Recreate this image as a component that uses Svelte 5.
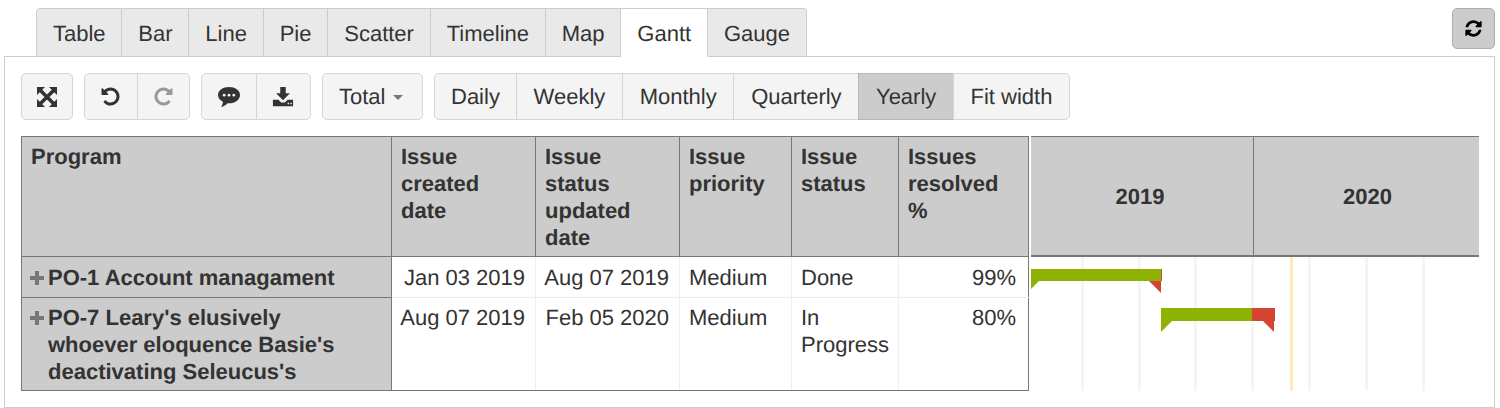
<script>
  const tabs = ['Table', 'Bar', 'Line', 'Pie', 'Scatter', 'Timeline', 'Map', 'Gantt', 'Gauge'];
  const periods = ['Daily', 'Weekly', 'Monthly', 'Quarterly', 'Yearly', 'Fit width'];
  const gridLines = [1081, 1138, 1194, 1251, 1308, 1365, 1422];
  const undoPath = 'M1664 896q0 156-61 298t-164 245-245 164-298 61q-172 0-327-72.500t-264-204.500q-7-10-6.500-22.500t8.500-20.500l137-138q10-9 25-9 16 2 23 12 73 95 179 147t225 52q104 0 198.500-40.500t163.500-109.500 109.500-163.500 40.500-198.500-40.500-198.500-109.500-163.500-163.500-109.500-198.500-40.500q-98 0-188 35.500t-160 101.500l137 138q31 30 14 69-17 40-59 40h-448q-26 0-45-19t-19-45v-448q0-42 40-59 39-17 69 14l130 129q107-101 244.500-156.500t284.500-55.500q156 0 298 61t245 164 164 245 61 298z';
</script>

<div class="page">
  <div class="top">
    <ul class="tabs">
      {#each tabs as tab}
        <li class:active={tab === 'Gantt'}>{tab}</li>
      {/each}
    </ul>
    <button class="refresh" aria-label="Refresh">
      <svg viewBox="0 0 1792 1792" width="19" height="19"><path d="M1639 1056q0 5-1 7-64 268-268 434.500t-478 166.500q-146 0-282.500-55t-243.500-157l-129 129q-19 19-45 19t-45-19-19-45v-448q0-26 19-45t45-19h448q26 0 45 19t19 45-19 45l-137 137q71 66 161 102t187 36q134 0 250-65t186-179q11-17 53-117 8-23 30-23h192q13 0 22.500 9.500t9.500 22.500zm25-800v448q0 26-19 45t-45 19h-448q-26 0-45-19t-19-45 19-45l138-138q-148-137-349-137-134 0-250 65t-186 179q-11 17-53 117-8 23-30 23h-199q-13 0-22.500-9.500t-9.500-22.500v-7q65-268 270-434.500t480-166.500q146 0 284 55.500t245 156.500l130-129q19-19 45-19t45 19 19 45z"/></svg>
    </button>
  </div>

  <div class="panel">
    <div class="toolbar">
      <div class="group">
        <button class="icon first" aria-label="Fullscreen">
          <svg viewBox="0 0 20 20" width="20" height="20">
            <path d="M0 0h8L0 8zM20 0v8l-8-8zM0 20v-8l8 8zM20 20h-8l8-8z"/>
            <path d="M3 3l14 14M17 3L3 17" stroke="#333" stroke-width="3.600" fill="none"/>
          </svg>
        </button>
      </div>
      <div class="group">
        <button class="icon" aria-label="Undo">
          <svg viewBox="0 0 1792 1792" width="21" height="21"><path d={undoPath}/></svg>
        </button>
        <button class="icon disabled" aria-label="Redo">
          <svg viewBox="0 0 1792 1792" width="21" height="21"><path transform="matrix(-1 0 0 1 1792 0)" d={undoPath}/></svg>
        </button>
      </div>
      <div class="group">
        <button class="icon wide" aria-label="Comment">
          <svg viewBox="0 0 24 24" width="24" height="24">
            <path d="M12 2C5.900 2 1 5.500 1 10c0 2.900 2 5.300 5 6.700-.2 2-1 4-2 5.300 2.700-.6 5-2.300 6.600-3.800.5.100.9.100 1.400.100 6.100 0 11-3.600 11-8.300S18.100 2 12 2z"/>
            <circle cx="7.200" cy="10.200" r="1.400" fill="#f4f4f4"/><circle cx="12" cy="10.200" r="1.400" fill="#f4f4f4"/><circle cx="16.800" cy="10.200" r="1.400" fill="#f4f4f4"/>
          </svg>
        </button>
        <button class="icon wide" aria-label="Download">
          <svg viewBox="0 0 24 24" width="22" height="22">
            <path d="M9 1h6v7h4.500L12 15.500 4.500 8H9z"/>
            <path fill-rule="evenodd" d="M1 15h6l3 3h4l3-3h6v7H1zM17 18.200h1.600v1.600H17zM20 18.200h1.600v1.600H20z"/>
          </svg>
        </button>
      </div>
      <div class="group">
        <button class="total">Total <span class="caret"></span></button>
      </div>
      <div class="group">
        {#each periods as period}
          <button class="period" class:on={period === 'Yearly'}>{period}</button>
        {/each}
      </div>
    </div>

    <div class="report">
      <table>
        <colgroup>
          <col class="c-program" /><col class="c-date" /><col class="c-date" /><col class="c-prio" /><col class="c-status" /><col />
        </colgroup>
        <thead>
          <tr>
            <th>Program</th>
            <th>Issue created date</th>
            <th>Issue status updated date</th>
            <th>Issue priority</th>
            <th>Issue status</th>
            <th>Issues resolved %</th>
          </tr>
        </thead>
        <tbody>
          <tr>
            <th>
              <div class="row-head">
                <svg class="plus" viewBox="0 0 14 14" width="14" height="14"><path d="M5 0h4v5h5v4H9v5H5V9H0V5h5z"/></svg>
                <span>PO-1 Account managament</span>
              </div>
            </th>
            <td class="right">Jan 03 2019</td>
            <td class="right">Aug 07 2019</td>
            <td>Medium</td>
            <td>Done</td>
            <td class="right pct">99%</td>
          </tr>
          <tr>
            <th>
              <div class="row-head">
                <svg class="plus" viewBox="0 0 14 14" width="14" height="14"><path d="M5 0h4v5h5v4H9v5H5V9H0V5h5z"/></svg>
                <span>PO-7 Leary's elusively whoever eloquence Basie's deactivating Seleucus's</span>
              </div>
            </th>
            <td class="right">Aug 07 2019</td>
            <td class="right">Feb 05 2020</td>
            <td>Medium</td>
            <td>In Progress</td>
            <td class="right pct">80%</td>
          </tr>
        </tbody>
      </table>

      <div class="gantt">
        <div class="years">
          <div class="year y2019">2019</div>
          <div class="year y2020">2020</div>
        </div>
        <svg class="chart" viewBox="1031 257 448 134" width="448" height="134">
          {#each gridLines as x}
            <rect {x} y="257" width="3" height="134" fill="#f4f4f4" />
          {/each}
          <rect x="1290" y="257" width="3" height="134" fill="#ffeab8" />

          <rect x="1031" y="269" width="131" height="12" fill="#d34532" />
          <rect x="1031" y="269" width="130" height="12" fill="#8eb200" />
          <polygon points="1031,281 1039,281 1031,289" fill="#8eb200" />
          <polygon points="1149,281 1161,281 1161,293" fill="#d34532" />

          <rect x="1252" y="308" width="23" height="13" fill="#d34532" />
          <rect x="1161" y="308" width="91" height="13" fill="#8eb200" />
          <polygon points="1161,321 1172,321 1161,332" fill="#8eb200" />
          <polygon points="1263,321 1274,321 1274,332" fill="#d34532" />
        </svg>
      </div>
    </div>
  </div>
</div>

<style>
  :global(body) {
    margin: 0;
    background: #fff;
    font-family: "Liberation Sans", Arial, sans-serif;
    color: #333;
    text-rendering: geometricPrecision;
  }

  .page {
    width: 1500px;
    height: 408px;
    padding: 8px 5px 0 4px;
    box-sizing: border-box;
    font-size: 22px;
  }

  .top {
    display: flex;
    justify-content: space-between;
    align-items: flex-start;
    height: 48px;
    padding-left: 32px;
  }

  .tabs {
    display: flex;
    list-style: none;
    margin: 0;
    padding: 0;
    position: relative;
    z-index: 1;
  }

  .tabs li {
    height: 49px;
    box-sizing: border-box;
    padding: 12px 15.750px 0 16px;
    line-height: 26px;
    background: #e9e9e9;
    border: 1px solid #ccc;
    border-left-width: 0;
  }

  .tabs li:first-child {
    border-left-width: 1px;
    border-top-left-radius: 4px;
  }

  .tabs li:last-child {
    border-top-right-radius: 4px;
  }

  .tabs li.active {
    background: #fff;
    border-bottom-color: #fff;
  }

  .refresh {
    width: 43px;
    height: 41px;
    padding: 0;
    display: flex;
    align-items: center;
    justify-content: center;
    background: #ccc;
    border: 1px solid #adadad;
    border-radius: 5px;
  }

  .panel {
    height: 352px;
    box-sizing: border-box;
    border: 1px solid #ccc;
    padding: 16px 0 0 16px;
  }

  .toolbar {
    display: flex;
    gap: 11px;
    height: 47px;
  }

  .group {
    display: flex;
  }

  button {
    font: inherit;
    color: #333;
    background: #f4f4f4;
    border: 1px solid #d5d5d5;
    height: 47px;
    padding: 0 17px;
    display: flex;
    align-items: center;
    justify-content: center;
    box-sizing: border-box;
    text-rendering: geometricPrecision;
  }

  .group button {
    margin-left: -1px;
  }

  .group button:first-child {
    margin-left: 0;
    border-radius: 5px 0 0 5px;
  }

  .group button:last-child {
    border-radius: 0 5px 5px 0;
  }

  .group button:only-child {
    border-radius: 5px;
  }

  .icon {
    width: 53.500px;
    padding: 0;
  }

  .icon.first {
    width: 52px;
  }

  .icon.wide {
    width: 55.500px;
  }

  .icon svg {
    fill: #333;
  }

  .icon.disabled svg {
    fill: #999;
  }

  .total {
    width: 101px;
    padding: 0 0 0 16px;
    gap: 8px;
    justify-content: flex-start;
  }

  .caret {
    border-top: 5px solid #777;
    border-left: 5.500px solid transparent;
    border-right: 5.500px solid transparent;
    margin-top: 1px;
  }

  .period {
    padding: 0 16.700px;
  }

  .period:first-child {
    padding: 0 16px;
  }

  .period:last-child {
    padding: 0 16.500px;
  }

  .period.on {
    background: #ccc;
    border-color: #b8b8b8;
  }

  .report {
    display: flex;
    gap: 2px;
    margin-top: 16px;
  }

  table {
    width: 1008px;
    table-layout: fixed;
    border-collapse: collapse;
    line-height: 27px;
    align-self: flex-start;
  }

  .c-program { width: 370px; }
  .c-date { width: 144px; }
  .c-prio { width: 112px; }
  .c-status { width: 107px; }

  th {
    background: #ccc;
    border: 1px solid #777;
    padding: 6px 9px 5px;
    text-align: left;
    vertical-align: top;
    font-weight: 700;
  }

  td {
    border: 1px solid #eee;
    padding: 6px 9px 5px;
    vertical-align: top;
  }

  tbody tr:first-child th,
  tbody tr:first-child td {
    padding-top: 7px;
    padding-bottom: 6px;
  }

  td.right {
    text-align: right;
    padding-left: 4px;
    padding-right: 10px;
    white-space: nowrap;
  }

  td.pct {
    padding-right: 12px;
    border-right-color: #777;
  }

  tbody tr:last-child td {
    border-bottom-color: #777;
  }

  .row-head {
    display: flex;
    gap: 4px;
    padding-right: 40px;
  }

  .plus {
    flex: none;
    fill: #777;
    margin: 7px 0 0 -1px;
  }

  .gantt {
    width: 448px;
  }

  .years {
    display: flex;
    height: 121px;
    box-sizing: border-box;
    background: #ccc;
    border-top: 1px solid #777;
    border-bottom: 2px solid #777;
    font-weight: 700;
  }

  .year {
    flex: 1;
    display: flex;
    align-items: center;
    justify-content: center;
    padding-top: 2px;
  }

  .y2019 {
    flex: none;
    width: 223px;
    box-sizing: border-box;
    padding-right: 4px;
    border-right: 1px solid #777;
  }

  .y2020 {
    padding-left: 2px;
  }

  .chart {
    display: block;
  }
</style>
